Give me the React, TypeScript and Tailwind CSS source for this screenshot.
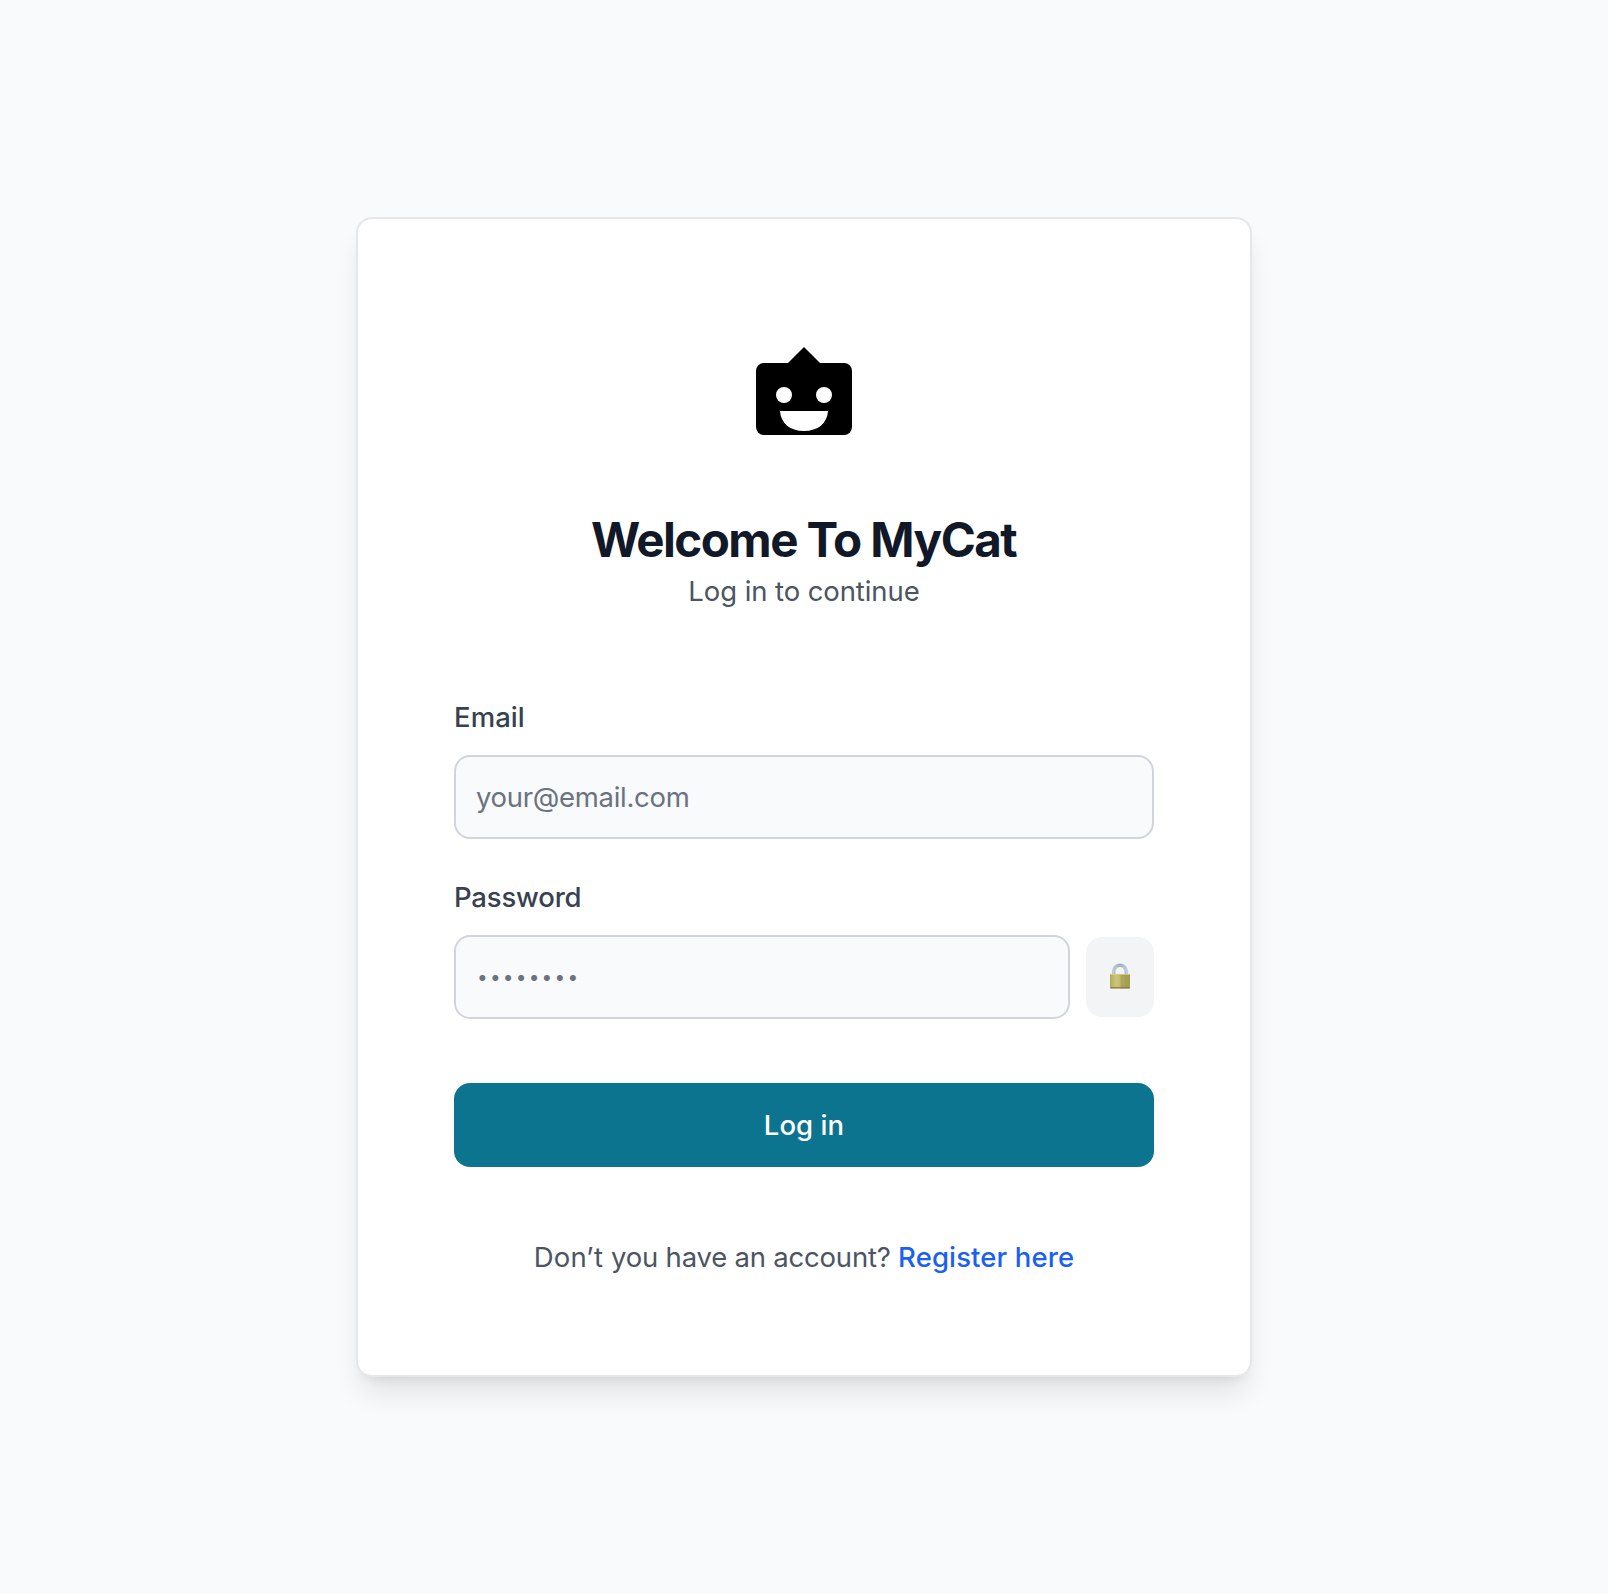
function CatLogo() {
  return (
    <svg className="size-32" viewBox="0 0 32 32" aria-hidden="true">
      <path
        fill="#000"
        fillRule="evenodd"
        d="M16 8l4 4h6a2 2 0 0 1 2 2v14a2 2 0 0 1-2 2H6a2 2 0 0 1-2-2V14a2 2 0 0 1 2-2h6zM11 18a2 2 0 1 0 0 4a2 2 0 0 0 0-4zM21 18a2 2 0 1 0 0 4a2 2 0 0 0 0-4zM10 24c.2 3.1 2.5 5 6 5s5.800-1.900 6-5z"
      />
    </svg>
  );
}

function LockIcon() {
  return (
    <svg className="mb-0.5 h-[26px] w-5" viewBox="0 0 20 26" aria-hidden="true">
      <defs>
        <linearGradient id="lock-body" x1="0" x2="1" y1="0" y2="0">
          <stop offset="0" stopColor="#b3aa58" />
          <stop offset="0.3" stopColor="#cbc57c" />
          <stop offset="0.5" stopColor="#c3bb6c" />
          <stop offset="0.55" stopColor="#aea65a" />
          <stop offset="1" stopColor="#a39a50" />
        </linearGradient>
        <linearGradient id="lock-shackle" x1="0" x2="1" y1="0" y2="0">
          <stop offset="0" stopColor="#bccbdc" />
          <stop offset="0.5" stopColor="#9fb2c8" />
          <stop offset="1" stopColor="#b9cfe8" />
        </linearGradient>
      </defs>
      <path
        d="M3.300 12.500V8.500A6.700 6.700 0 0 1 16.700 8.500v4"
        fill="none"
        stroke="url(#lock-shackle)"
        strokeWidth="2.800"
      />
      <path d="M4.900 11V8.800A5.100 5.300 0 0 1 15.100 8.800v2.200" fill="none" stroke="#8b929b" strokeWidth="0.600" />
      <rect y="11" width="20" height="14.500" rx="0.800" fill="url(#lock-body)" />
      <path d="M0.500 11.400h19" stroke="#ded68a" strokeWidth="0.800" />
      <path d="M0.300 24.800h19.400" stroke="#857a38" strokeWidth="1.200" />
    </svg>
  );
}

const field =
  "block h-21 min-w-0 rounded-2xl border-2 border-[#d1d5db] bg-[#f9fafc] px-5 text-[27.5px] text-gray-900 outline-none placeholder:text-[#6b7280] placeholder:opacity-100";

export default function App() {
  return (
    <main className="flex min-h-screen items-center justify-center bg-[#f9fafc] font-['Inter',sans-serif] text-[27.5px] leading-10">
      <section className="flex h-[1160px] w-4xl flex-col rounded-2xl border-2 border-[#e5e7eb] bg-white p-24 shadow-[0_20px_30px_-6px_rgb(0_0_0/0.1),0_8px_12px_-8px_rgb(0_0_0/0.1)]">
        <header className="flex flex-col items-center">
          <CatLogo />
          <h1 className="mt-[73px] mr-px text-[47.5px] leading-12 font-bold tracking-[-1.540px] text-[#111827]">
            Welcome To MyCat
          </h1>
          <p className="mt-[7px] tracking-[-0.090px] text-[#4b5563]">Log in to continue</p>
        </header>

        <form className="mt-[86px] flex flex-col" onSubmit={(e) => e.preventDefault()}>
          <label htmlFor="email" className="font-medium tracking-[0.080px] text-[#374151]">
            Email
          </label>
          <input
            id="email"
            type="email"
            placeholder="your@email.com"
            className={`${field} mt-[18px] tracking-[-0.300px]`}
          />

          <label htmlFor="password" className="mt-[38px] font-medium tracking-[-0.180px] text-[#374151]">
            Password
          </label>
          <div className="mt-[18px] flex items-center gap-4">
            <input
              id="password"
              type="password"
              placeholder="••••••••"
              className={`${field} flex-1 pb-1.5 pl-[21px] placeholder:text-[19px] placeholder:tracking-[2.230px]`}
            />
            <button
              type="button"
              aria-label="Show password"
              className="flex h-20 w-17 items-center justify-center rounded-2xl bg-[#f3f4f6]"
            >
              <LockIcon />
            </button>
          </div>

          <button
            type="submit"
            className="mt-16 h-21 rounded-2xl bg-[#0d7490] pb-px font-medium tracking-[0.050px] text-white"
          >
            Log in
          </button>
        </form>

        <p className="mt-[70px] text-center whitespace-nowrap text-[#4b5563]">
          <span className="tracking-[0.150px]">Don’t </span>
          <span className="tracking-[-0.210px]">you have an account? </span>
          <a href="#" className="font-medium tracking-[0.120px] text-[#1a60f5]">
            Register here
          </a>
        </p>
      </section>
    </main>
  );
}
